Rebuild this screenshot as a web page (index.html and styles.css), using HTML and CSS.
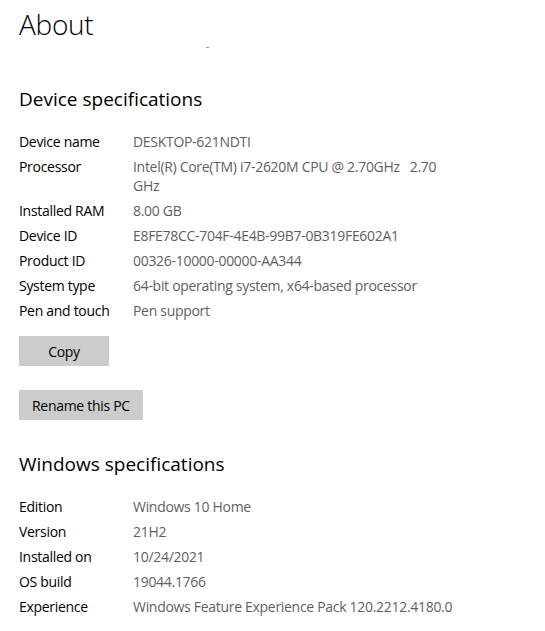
FILE: index.html
```html
<!DOCTYPE html>
<html lang="en">
<head>
<meta charset="utf-8">
<title>About</title>
<link rel="stylesheet" href="styles.css">
</head>
<body>
<main class="page">
  <h1 class="title">About</h1>
  <div class="speck"></div>

  <section class="section">
    <h2 class="heading">Device specifications</h2>
    <dl class="specs">
      <dt>Device name</dt><dd>DESKTOP-621NDTI</dd>
      <dt>Processor</dt><dd>Intel(R) Core(TM) i7-2620M CPU @ 2.70GHz&nbsp;&nbsp; 2.70 GHz</dd>
      <dt>Installed RAM</dt><dd>8.00 GB</dd>
      <dt>Device ID</dt><dd>E8FE78CC-704F-4E4B-99B7-0B319FE602A1</dd>
      <dt>Product ID</dt><dd>00326-10000-00000-AA344</dd>
      <dt>System type</dt><dd>64-bit operating system, x64-based processor</dd>
      <dt>Pen and touch</dt><dd>Pen support</dd>
    </dl>
    <div class="actions">
      <button class="btn" type="button">Copy</button>
      <button class="btn" type="button">Rename this PC</button>
    </div>
  </section>

  <section class="section section-win">
    <h2 class="heading">Windows specifications</h2>
    <dl class="specs specs-wide">
      <dt>Edition</dt><dd>Windows 10 Home</dd>
      <dt>Version</dt><dd>21H2</dd>
      <dt>Installed on</dt><dd>10/24/2021</dd>
      <dt>OS build</dt><dd>19044.1766</dd>
      <dt>Experience</dt><dd>Windows Feature Experience Pack 120.2212.4180.0</dd>
    </dl>
  </section>
</main>
</body>
</html>
```

FILE: styles.css
```css
* { box-sizing: border-box; }

html, body {
  margin: 0;
  background: #ffffff;
}

body {
  font-family: "Open Sans", "Noto Sans", "Liberation Sans", sans-serif;
  color: #000000;
}

.page {
  padding: 6px 0 0 19px;
  width: 545px;
}

.title {
  margin: 0;
  font-size: 28px;
  font-weight: 300;
  line-height: 36px;
  letter-spacing: -0.3px;
}

.speck {
  width: 3px;
  height: 1px;
  margin: 5px 0 0 187px;
  background: #9a9a9a;
}

.section {
  margin-top: 37px;
}

.section-win {
  margin-top: 30px;
}

.heading {
  margin: 0 0 19px;
  font-size: 19px;
  font-weight: 400;
  line-height: 28px;
}

.specs {
  display: grid;
  grid-template-columns: 114px 316px;
  row-gap: 6px;
  margin: 0;
  font-size: 14px;
  line-height: 19px;
  letter-spacing: -0.3px;
}

.specs-wide {
  grid-template-columns: 114px 400px;
}

.specs dt {
  margin: 0;
  color: #000000;
}

.specs dd {
  margin: 0;
  color: #5f5f5f;
}

.actions {
  display: flex;
  flex-direction: column;
  align-items: flex-start;
  gap: 24px;
  margin-top: 16px;
}

.btn {
  min-width: 90px;
  height: 30px;
  padding: 0 12px;
  border: 1px solid #cccccc;
  background: #cccccc;
  color: #000000;
  font-family: inherit;
  font-size: 14px;
  line-height: 19px;
  letter-spacing: -0.3px;
}
```
